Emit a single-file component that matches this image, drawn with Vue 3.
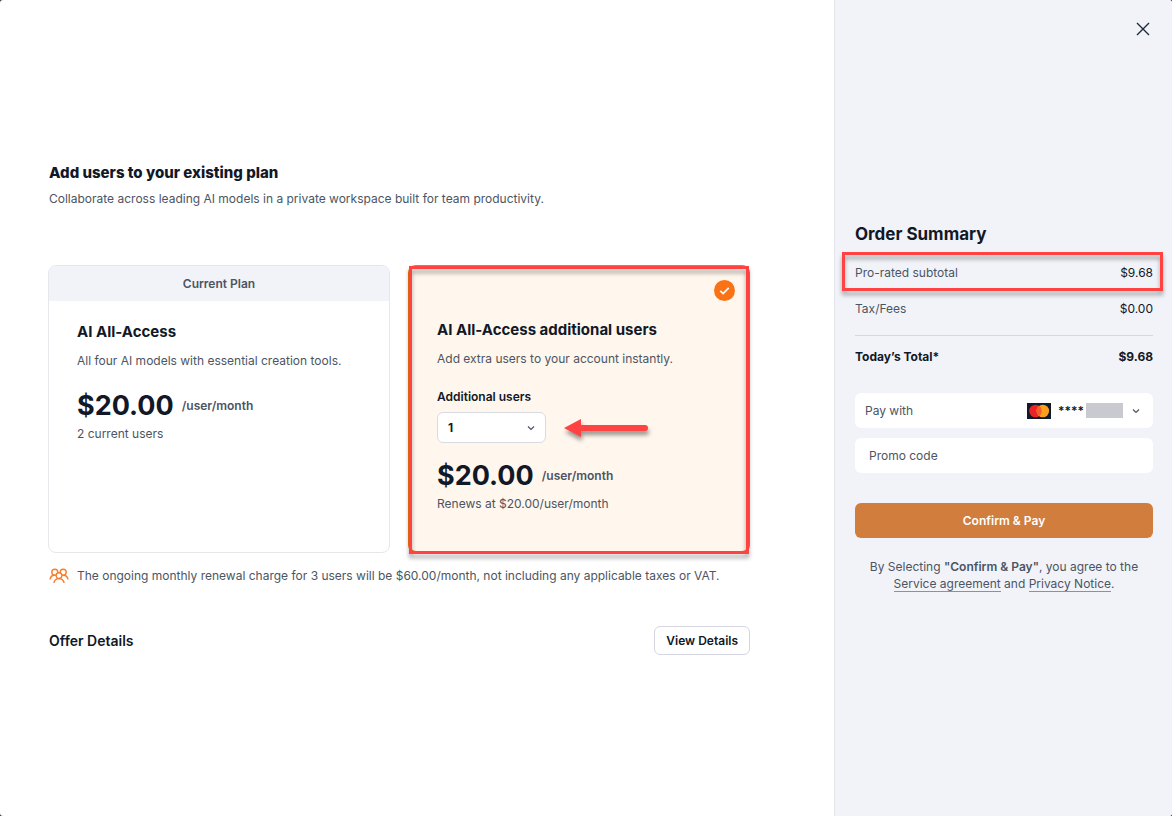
<script setup>
import { ref } from 'vue'

const seats = ref('1')
const promo = ref('')
</script>

<template>
  <div class="page">
    <main class="plans">
      <header class="intro">
        <h1>Add users to your existing plan</h1>
        <p>Collaborate across leading AI models in a private workspace built for team productivity.</p>
      </header>

      <div class="cards">
        <section class="card current">
          <div class="ribbon">Current Plan</div>
          <div class="body">
            <h2>AI All-Access</h2>
            <p class="desc">All four AI models with essential creation tools.</p>
            <div class="price"><strong>$20.00</strong><span>/user/month</span></div>
            <p class="small">2 current users</p>
          </div>
        </section>

        <section class="card extra">
          <svg class="badge" viewBox="0 0 20 20" aria-hidden="true">
            <circle cx="10" cy="10" r="10" fill="#f97316" />
            <path d="M6 10.3 8.7 12.9 14 7.6" fill="none" stroke="#fff" stroke-width="1.7" />
          </svg>
          <div class="body">
            <h2>AI All-Access additional users</h2>
            <p class="desc">Add extra users to your account instantly.</p>
            <label for="seats">Additional users</label>
            <div class="picker">
              <select id="seats" v-model="seats">
                <option v-for="n in 5" :key="n" :value="String(n)">{{ n }}</option>
              </select>
              <svg class="chevron" viewBox="0 0 8 8" aria-hidden="true">
                <path d="M1 2.5 4 5.5 7 2.5" />
              </svg>
              <svg class="arrow" viewBox="0 0 84 20" aria-hidden="true">
                <path d="M0 10 17 1V7H81A3 3 0 0 1 81 13H17V19Z" fill="#ff4242" />
              </svg>
            </div>
            <div class="price"><strong>$20.00</strong><span>/user/month</span></div>
            <p class="small">Renews at $20.00/user/month</p>
          </div>
          <div class="mark mark-card"></div>
        </section>
      </div>

      <p class="note">
        <svg viewBox="0 0 20 16" aria-hidden="true">
          <circle cx="5.8" cy="4.2" r="3" />
          <circle cx="14.2" cy="4.2" r="3" />
          <path d="M1 11.5C1.4 8.9 3 7.3 5.4 7.2M19 11.5C18.6 8.9 17 7.3 14.6 7.2" />
          <circle class="front" cx="10" cy="7.6" r="2.9" />
          <path d="M4.9 15C5.4 12.1 7.3 10.6 10 10.6S14.600 12.100 15.100 15" />
        </svg>
        The ongoing monthly renewal charge for 3 users will be $60.00/month, not including any applicable taxes or VAT.
      </p>

      <div class="offer">
        <h3>Offer Details</h3>
        <button type="button" class="outline">View Details</button>
      </div>
    </main>

    <aside class="side">
      <button type="button" class="close" aria-label="Close">
        <svg viewBox="0 0 14 14" aria-hidden="true"><path d="M1 1 13 13M13 1 1 13" /></svg>
      </button>
      <h2>Order Summary</h2>
      <dl>
        <div class="row">
          <dt>Pro-rated subtotal</dt>
          <dd>$9.68</dd>
          <div class="mark mark-row"></div>
        </div>
        <div class="row">
          <dt>Tax/Fees</dt>
          <dd>$0.00</dd>
        </div>
        <div class="row total">
          <dt>Today’s Total*</dt>
          <dd>$9.68</dd>
        </div>
      </dl>

      <button type="button" class="pay">
        <span class="pay-label">Pay with</span>
        <svg class="brand" viewBox="0 0 24 16" aria-hidden="true">
          <rect width="24" height="16" fill="#0f1b2d" />
          <circle cx="8.500" cy="8" r="6.300" fill="#eb2226" />
          <circle cx="15.800" cy="8" r="6.300" fill="#f9a01e" />
          <path d="M12.150 2.870A6.300 6.300 0 0 1 12.150 13.130A6.300 6.300 0 0 1 12.150 2.870Z" fill="#f2602a" />
        </svg>
        <span class="stars">****</span>
        <span class="redacted"></span>
        <svg class="chevron" viewBox="0 0 8 8" aria-hidden="true">
          <path d="M1 2.5 4 5.5 7 2.5" />
        </svg>
      </button>
      <input v-model="promo" class="promo" type="text" placeholder="Promo code" aria-label="Promo code" />
      <button type="button" class="confirm">Confirm &amp; Pay</button>
      <p class="legal">
        By Selecting <b>"Confirm &amp; Pay"</b>, you agree to the<br />
        <a href="#service">Service agreement</a> and <a href="#privacy">Privacy Notice</a>.
      </p>
    </aside>
  </div>
</template>

<style>
body {
  margin: 0;
  background: #3b3b4a;
}
</style>

<style scoped>
.page,
.page * {
  box-sizing: border-box;
}

.page {
  display: grid;
  grid-template-columns: minmax(0, 1fr) 338px;
  min-height: 100vh;
  border-radius: 3px;
  overflow: hidden;
  background: #fff;
  font: 400 12px/20px Inter, sans-serif;
  color: #4b5563;
}

h1,
h2,
h3,
p,
dl,
dd {
  margin: 0;
}

h1,
h2,
h3 {
  color: #111827;
}

button,
input,
select {
  font: inherit;
  color: inherit;
}

button {
  cursor: pointer;
}

.plans {
  display: flex;
  flex-direction: column;
  justify-content: center;
  padding: 0 84px 0 48px;
}

.intro {
  padding-left: 1px;
  margin-bottom: 56px;
}

h1 {
  margin-bottom: 4px;
  font-size: 15px;
  line-height: 24px;
  font-weight: 800;
}

.cards {
  display: grid;
  grid-template-columns: 1fr 1fr;
  gap: 18px;
}

.card {
  position: relative;
  border-radius: 8px;
}

.current {
  border: 1px solid #e5e7eb;
  overflow: hidden;
}

.ribbon {
  padding: 8px;
  line-height: 19px;
  font-weight: 600;
  text-align: center;
  background: #f2f3f8;
}

.current .body {
  padding: 19px 28px 0;
}

.extra {
  border: 2px solid #f97316;
  background: #fff6ed;
}

.extra .body {
  padding: 51px 27px 37px;
}

.card h2 {
  margin-bottom: 7px;
  font-size: 15px;
  line-height: 24px;
  font-weight: 650;
}

.desc {
  margin-bottom: 17px;
}

.extra .desc {
  margin-bottom: 18px;
}

label {
  display: block;
  margin-bottom: 5px;
  font-weight: 600;
  color: #111827;
}

.picker {
  position: relative;
  display: flex;
  align-items: center;
  margin-bottom: 15px;
}

.picker select {
  width: 109px;
  height: 31px;
  padding: 0 10px;
  border: 1px solid #d9dbe3;
  border-radius: 6px;
  background: #fff;
  color: #111827;
  font-weight: 700;
  appearance: none;
}

.chevron {
  width: 8px;
  height: 8px;
  fill: none;
  stroke: #4b5563;
  stroke-width: 1.2;
}

.picker .chevron {
  position: absolute;
  left: 90px;
}

.arrow {
  width: 84px;
  height: 20px;
  margin-left: 18px;
  overflow: visible;
  filter: drop-shadow(1px 4px 2px rgba(0, 0, 0, 0.4));
}

.price {
  display: flex;
  align-items: center;
  gap: 8px;
  height: 36px;
}

.price strong {
  font-size: 27px;
  line-height: 36px;
  font-weight: 700;
  color: #111827;
}

.price span {
  font-weight: 600;
}

.badge {
  position: absolute;
  top: 13px;
  right: 13px;
  width: 21px;
  height: 21px;
}

.mark {
  position: absolute;
  border: 3px solid #ff4242;
  filter: drop-shadow(0 4px 2px rgba(0, 0, 0, 0.35));
  pointer-events: none;
}

.mark-card {
  inset: -1px -1px -3px -1px;
}

.note {
  display: flex;
  align-items: center;
  gap: 8px;
  margin: 13px 0 40px 1px;
}

.note svg {
  flex: none;
  width: 20px;
  height: 16px;
  fill: none;
  stroke: #f97d2a;
  stroke-width: 1.4;
}

.note .front {
  fill: #fff;
}

.offer {
  display: flex;
  align-items: center;
  justify-content: space-between;
  padding-left: 1px;
}

h3 {
  font-size: 14px;
  font-weight: 600;
}

.outline {
  height: 29px;
  padding: 0 11px;
  border: 1px solid #d5d6e2;
  border-radius: 6px;
  background: #fff;
  color: #111827;
  font-weight: 600;
}

.side {
  position: relative;
  display: flex;
  flex-direction: column;
  justify-content: center;
  padding: 0 19px 2px 20px;
  border-left: 1px solid #e2e5ea;
  background: #f2f3f8;
}

.side h2 {
  margin-bottom: 17px;
  font-size: 17px;
  line-height: 24px;
  font-weight: 700;
}

.close {
  position: absolute;
  top: 16px;
  right: 16px;
  width: 26px;
  height: 26px;
  padding: 6px;
  border: 0;
  background: none;
}

.close svg {
  display: block;
  width: 14px;
  height: 14px;
  stroke: #1f2937;
  stroke-width: 1.4;
}

.row {
  position: relative;
  display: flex;
  justify-content: space-between;
  margin-bottom: 16px;
}

.row dd {
  color: #111827;
}

.mark-row {
  inset: -11px -10px -8px -13px;
}

.row.total {
  margin-bottom: 26px;
  padding-top: 11px;
  border-top: 1px solid #d5d8dd;
  color: #111827;
  font-weight: 700;
}

.pay {
  display: flex;
  align-items: center;
  height: 35px;
  margin-bottom: 10px;
  padding: 0 13px 0 10px;
  border: 0;
  border-radius: 6px;
  background: #fff;
}

.pay-label {
  margin-right: auto;
}

.brand {
  width: 24px;
  height: 16px;
  margin-right: 7px;
}

.stars {
  color: #111827;
  font-weight: 600;
}

.redacted {
  width: 37px;
  height: 15px;
  margin: 0 9px 0 2px;
  background: #c9cacf;
}

.promo {
  width: 100%;
  height: 35px;
  margin-bottom: 30px;
  padding: 0 14px;
  border: 0;
  border-radius: 6px;
  background: #fff;
}

.promo::placeholder {
  color: #4b5563;
  opacity: 1;
}

.confirm {
  height: 35px;
  margin-bottom: 20px;
  border: 0;
  border-radius: 6px;
  background: #d07d3d;
  color: #fff;
  font-weight: 600;
}

.legal {
  line-height: 17px;
  text-align: center;
}

.legal b {
  font-weight: 600;
}

.legal a {
  color: inherit;
  text-decoration: none;
  border-bottom: 1px solid #8b919d;
}
</style>
